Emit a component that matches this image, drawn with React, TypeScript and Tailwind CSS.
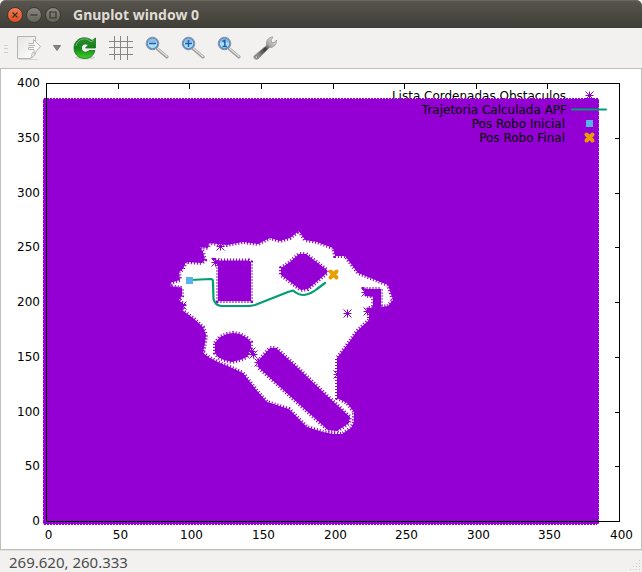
import React from "react";

const PURPLE = "#9400d3";
const GREEN = "#009e73";

const LEFT = 46.5;
const RIGHT = 619.5;
const TOP = 83.5;
const BOTTOM = 521.5;
const TICKS = [0, 50, 100, 150, 200, 250, 300, 350, 400];

const sx = (v: number) => Math.round(LEFT + ((RIGHT - LEFT) * v) / 400 - 0.5) + 0.5;
const sy = (v: number) => Math.round(BOTTOM - ((BOTTOM - TOP) * v) / 400 - 0.5) + 0.5;

const FREE_SPACE =
  "M170 283L180 280L179 272L183 269L186 262L202 263L205 260L203 252L200 247L208 248L209 243L227 245L243 242L258 244L270 238L280 241L290 238L299 231L305 240L317 242L333 248L335 256L345 256L358 273L373 279L388 285L393 300L388 306L381 307L381 289L364 289L366 296L373 296L373 308L367 308L369 314L369 320L357 331L347 345L337 358V398L347 403L354 412L354 422L351 428L342 434L333 434L323 432L307 427L289 409L267 402L258 392L243 373L230 367L220 363L210 358L203 353L205 343L206 335L203 327L193 318L182 310L184 305L179 300L182 296L182 288L170 286Z";
const OBSTACLES = [
  "M215 260L220 260.500H249L251 262V301H218V266Z",
  "M281 268L290 262L299 254H306L327 270V273L308 289L301 290L281 275Z",
  "M215 343L220 337L227 334L233 333L240 334L247 338L251 342V348L247 357L240 360L232 362L224 360L218 357L215 353Z",
  "M258 361L270 348H276L298 368L323 392L350 417L349 423L337 431L328 430L290 396L258 367Z",
];

function Star({ x, y, r = 4 }: { x: number; y: number; r?: number }) {
  return (
    <path
      d={`M${x - r} ${y}h${2 * r}M${x} ${y - r}v${2 * r}M${x - r} ${y - r}l${2 * r} ${2 * r}M${x - r} ${y + r}l${2 * r} ${-2 * r}`}
      stroke={PURPLE}
      fill="none"
    />
  );
}

function Cross({ x, y }: { x: number; y: number }) {
  return (
    <path d={`M${x - 3} ${y - 3}l6 6M${x - 3} ${y + 3}l6 -6`} stroke="#e69f00" strokeWidth="4" strokeLinecap="round" />
  );
}

function Plot() {
  return (
    <svg
      viewBox="1 69 640 480"
      className="block h-auto w-full font-['DejaVu_Sans',sans-serif] text-[12px]"
      role="img"
      aria-label="Obstacle map with robot trajectory"
    >
      <g stroke="#000" fill="none" shapeRendering="crispEdges">
        {TICKS.map((t) => (
          <path key={t} d={`M${sx(t)} ${TOP}v5M${RIGHT} ${sy(t)}h-5`} />
        ))}
      </g>
      <g textAnchor="end">
        {TICKS.map((t) => (
          <text key={t} x="40" y={sy(t) + 3.5}>{t}</text>
        ))}
      </g>
      <g textAnchor="middle">
        {TICKS.map((t) => (
          <text key={t} x={sx(t) + 2} y="539">{t}</text>
        ))}
      </g>
      <text x="566" y="100" textAnchor="end">Lista Cordenadas Obstaculos</text>
      <Star x={589.5} y={95.5} />

      <rect x="43" y="99" width="556" height="425" fill={PURPLE} />
      <path d="M44 98.5H599M44 524.5H597" stroke={PURPLE} strokeDasharray="2 1" />
      <path d="M43.5 99V524M598.5 99V524" stroke="#fff" strokeOpacity="0.35" strokeDasharray="1 3" />

      <path d={FREE_SPACE} fill="#fff" />
      <path d={FREE_SPACE} fill="none" stroke={PURPLE} strokeWidth="4" strokeDasharray="1.1 1.9" />
      {OBSTACLES.map((d) => (
        <g key={d}>
          <path d={d} fill={PURPLE} />
          <path d={d} fill="none" stroke={PURPLE} strokeWidth="4" strokeDasharray="1.1 1.9" />
        </g>
      ))}
      <Star x={220.5} y={246.5} />
      <Star x={215.5} y={262.5} />
      <Star x={176.5} y={290.5} />
      <Star x={182.5} y={305.5} />
      <Star x={347.5} y={313.5} />
      <Star x={337.5} y={374.5} />
      <Star x={365.5} y={292.5} />
      <Star x={367.5} y={311.5} />
      <Star x={253.5} y={354.5} />
      <Star x={251.5} y={351.5} />
      <Star x={258.5} y={362.5} />

      <path d={`M${LEFT} ${TOP}H${RIGHT}V${BOTTOM}H${LEFT}Z`} fill="none" stroke="#000" shapeRendering="crispEdges" />

      <g fill="none" stroke={GREEN} strokeWidth="2.200" strokeLinejoin="round" strokeLinecap="round">
        <path d="M190 280L211 279Q213 279 213 282L213.500 299Q215 305 221 306H250L255 305L288 292L293 290.500Q298 295 304 295Q311 294 317 289L325 283" />
        <path d="M572 109.500H606" strokeWidth="2" />
      </g>
      <rect x="186" y="277" width="7" height="7" fill="#56b4e9" />
      <Cross x={333.5} y={274.5} />

      <g textAnchor="end">
        <text x="567" y="114">Trajetoria Calculada APF</text>
        <text x="565" y="128">Pos Robo Inicial</text>
        <text x="565" y="142">Pos Robo Final</text>
      </g>
      <rect x="586" y="120" width="7" height="7" fill="#56b4e9" />
      <Cross x={589.5} y={137.5} />
    </svg>
  );
}

function Magnifier({ children }: { children: React.ReactNode }) {
  return (
    <svg viewBox="0 0 24 24" className="size-6">
      <path d="M12.500 13L22 21" stroke="#9a9a98" strokeWidth="3" strokeLinecap="round" />
      <path d="M12.500 12.500L22 20.500" stroke="#dededc" strokeWidth="1.400" strokeLinecap="round" />
      <circle cx="7.500" cy="7.500" r="6.300" fill="#a9e0f8" stroke="#8a9399" />
      <circle cx="7.500" cy="7.500" r="5.300" fill="none" stroke="#6088bd" strokeWidth="1.200" />
      <path d="M3 6.500A4.600 4.600 0 0 1 12 6.500" fill="#8cbde6" />
      <g stroke="#2460a8" strokeWidth="1.500" fill="none">{children}</g>
    </svg>
  );
}

function PageIcon() {
  return (
    <svg viewBox="0 0 24 24" className="size-6">
      <defs>
        <linearGradient id="paper" x1="0" y1="0" x2="1" y2="1">
          <stop stopColor="#e4e4e2" />
          <stop offset="1" stopColor="#fff" />
        </linearGradient>
      </defs>
      <path d="M2 23.500H21" stroke="#d5d4d2" />
      <path d="M.5 .5H18.500V18L14 22.500H.5Z" fill="url(#paper)" stroke="#b5b4b2" />
      <path d="M11.500 7.500H16.500V3.500L23.500 10.500L17 18V13.500H11.500V11.500H17M11.500 9.500H18" fill="#f8f8f7" stroke="#b5b4b2" />
      <path d="M18.500 18L13.500 22.500L15.500 16.500Z" fill="#ececea" stroke="#c0bfbd" />
    </svg>
  );
}

function ReloadIcon() {
  return (
    <svg viewBox="0 0 24 24" className="size-6">
      <defs>
        <linearGradient id="leaf" x1="0" y1="0" x2="0" y2="1">
          <stop stopColor="#2c8a30" />
          <stop offset="0.500" stopColor="#128416" />
          <stop offset="1" stopColor="#3fd226" />
        </linearGradient>
      </defs>
      <ellipse cx="12" cy="21.500" rx="10" ry="2" fill="#d0d0cd" />
      <path
        d="M19 4.500L22.500 2V12H12.500L15.500 8.800C11.500 6.800 8.500 9 8.500 12C8.500 16.500 14 17.500 16 14.500H22C20.500 20 16.500 22.500 12 22.500C5.500 22.500 1 18 1 12C1 3 11 -1.500 19 4.500Z"
        fill="url(#leaf)"
        stroke="#15751a"
        strokeWidth="0.800"
      />
      <path d="M3 10C5 2 13 1 18 5.800L21 4" fill="none" stroke="#68b766" />
    </svg>
  );
}

function WrenchIcon() {
  return (
    <svg viewBox="0 0 24 24" className="size-6">
      <defs>
        <linearGradient id="steel" x1="0" y1="1" x2="1" y2="0">
          <stop stopColor="#b5b5b3" />
          <stop offset="0.250" stopColor="#7a7a78" />
          <stop offset="0.480" stopColor="#3a3b39" />
          <stop offset="0.650" stopColor="#a5a5a2" />
          <stop offset="1" stopColor="#f2f2f0" />
        </linearGradient>
      </defs>
      <path
        d="M1 20L13.500 9.500C13 5 15 1 20 1L18 4L19 7L22 6L23.500 4C24 9 20 12 16.500 11.500L5 23C2 24 0 22 1 20Z"
        fill="url(#steel)"
        stroke="#8d8d8b"
        strokeWidth="0.700"
      />
      <circle cx="3.300" cy="21" r="1.200" fill="#e9e9e7" stroke="#50504e" strokeWidth="0.600" />
    </svg>
  );
}

function ToolButton({ label, children }: { label: string; children: React.ReactNode }) {
  return (
    <button type="button" aria-label={label} className="shrink-0">
      {children}
    </button>
  );
}

function WindowButton({ label, tone, d }: { label: string; tone: string; d: string }) {
  return (
    <button type="button" aria-label={label} className={`size-4 rounded-full border border-[#3b3a34] ${tone}`}>
      <svg viewBox="0 0 14 14" className="block size-full" fill="none" stroke="#35342f" strokeWidth="1.200">
        <path d={d} />
      </svg>
    </button>
  );
}

export default function App() {
  return (
    <main className="flex w-full flex-col bg-[#f2f1f0] font-['Noto_Sans',sans-serif]">
      <header className="flex h-7 items-center rounded-t-md bg-linear-to-b from-[#58564e] to-[#3e3d37] px-[7px] pt-px shadow-[inset_0_1px_0_#69675e]">
        <div className="flex items-center gap-[3px]">
          <WindowButton label="Close" tone="bg-linear-to-b from-[#f47b53] to-[#df4b1a]" d="M4.500 4.500l5 5M9.500 4.500l-5 5" />
          <WindowButton label="Minimize" tone="bg-linear-to-b from-[#8a877d] to-[#65635b]" d="M3.500 7h7" />
          <WindowButton label="Maximize" tone="bg-linear-to-b from-[#8a877d] to-[#65635b]" d="M4 4h6v6H4z" />
        </div>
        <h1 className="ml-3 text-[14px] leading-7 font-bold text-[#dfdbd2]">Gnuplot window 0</h1>
      </header>

      <div role="toolbar" aria-label="Plot tools" className="flex h-10 items-center gap-3 pl-1">
        <svg viewBox="0 0 4 9" className="-mr-[3px] h-[9px] w-1 shrink-0" stroke="#cfcecb" shapeRendering="crispEdges">
          <path d="M0 1.500h4M0 4.500h4M0 8h4" />
        </svg>
        <ToolButton label="Export"><PageIcon /></ToolButton>
        <ToolButton label="Export options">
          <svg viewBox="0 0 8 6" className="h-[6px] w-2">
            <path d="M.5 .5h7L4 5.500z" fill="#858482" stroke="#666563" strokeWidth="0.800" />
          </svg>
        </ToolButton>
        <ToolButton label="Replot"><ReloadIcon /></ToolButton>
        <ToolButton label="Toggle grid">
          <svg viewBox="0 0 24 24" className="size-6" stroke="#868583" shapeRendering="crispEdges">
            <path d="M5.500 0v24M11.500 0v24M18.500 0v24M0 5.500h24M0 11.500h24M0 18.500h24" />
          </svg>
        </ToolButton>
        <ToolButton label="Previous zoom"><Magnifier><path d="M4 7.500h7" /></Magnifier></ToolButton>
        <ToolButton label="Next zoom"><Magnifier><path d="M4 7.500h7M7.500 4v7" /></Magnifier></ToolButton>
        <ToolButton label="Autoscale"><Magnifier><path d="M5.500 5.500L7.800 4.500V10.500M5.500 10.500h4.500" /></Magnifier></ToolButton>
        <ToolButton label="Configure"><WrenchIcon /></ToolButton>
      </div>

      <section className="border border-[#c1beb9] bg-white">
        <Plot />
      </section>

      <footer className="flex h-[22px] items-center justify-between border-t border-[#e3e1de] pl-[9px]">
        <output className="text-[15px] leading-5 text-[#4c4c4c]">269.620, 260.333</output>
        <svg viewBox="0 0 12 12" className="size-3 self-end" fill="#cfccc8" aria-hidden="true">
          {[[9, 0], [6, 3], [9, 3], [3, 6], [6, 6], [9, 6], [0, 9], [3, 9], [6, 9], [9, 9]].map(([x, y]) => (
            <rect key={`${x}-${y}`} x={x} y={y} width="1" height="1" />
          ))}
        </svg>
      </footer>
    </main>
  );
}
